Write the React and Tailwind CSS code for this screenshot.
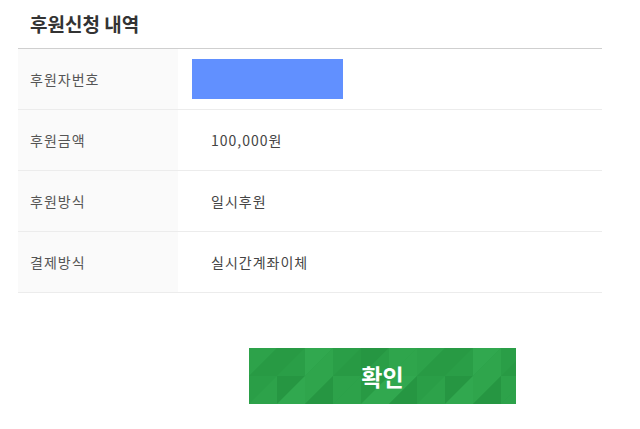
import React from 'react';

const rows = [
  { label: '후원자번호', value: null },
  { label: '후원금액', value: '100,000원' },
  { label: '후원방식', value: '일시후원' },
  { label: '결제방식', value: '실시간계좌이체' },
];

// triangle shades for the button pattern
const shades = ['#2da24a', '#289a44', '#31a84f', '#2a9e47', '#269642', '#2fa54c'];

const Pattern = () => {
  const tris = [];
  const size = 28;
  for (let r = 0; r < 2; r++) {
    for (let c = 0; c < 10; c++) {
      const x = c * size;
      const y = r * size;
      tris.push(
        <polygon key={`a${r}-${c}`} points={`${x},${y} ${x + size},${y} ${x},${y + size}`} fill={shades[(r * 3 + c) % 6]} />,
        <polygon key={`b${r}-${c}`} points={`${x + size},${y} ${x + size},${y + size} ${x},${y + size}`} fill={shades[(r * 5 + c * 2 + 1) % 6]} />
      );
    }
  }
  return (
    <svg className="absolute inset-0" width="267" height="56" viewBox="0 0 267 56" preserveAspectRatio="none">
      <rect width="267" height="56" fill="#2a9e47" />
      {tris}
    </svg>
  );
};

export default function App() {
  return (
    <div className="w-[640px] h-[429px] bg-white pl-[18px] pr-[38px] font-['Noto_Sans_CJK_KR','Noto_Sans',sans-serif]">
      <h2 className="pl-[12px] pt-[9px] pb-[9px] text-[19px] leading-[30px] font-bold text-[#333]">후원신청 내역</h2>
      <div className="border-t border-[#cfcfcf]">
        {rows.map((r) => (
          <div key={r.label} className="flex h-[61px] border-b border-[#ececec]">
            <div className="w-[160px] bg-[#fafafa] pl-[12px] flex items-center text-[14px] tracking-[1px] text-[#555]">{r.label}</div>
            <div className="flex-1 flex items-center text-[14px] tracking-[1px] text-[#444]">
              {r.value ? (
                <span className="pl-[33px]">{r.value}</span>
              ) : (
                <div className="ml-[14px] w-[151px] h-[40px] bg-[#6190ff]" />
              )}
            </div>
          </div>
        ))}
      </div>
      <div className="flex pt-[55px] pl-[231px]">
        <button className="relative w-[267px] h-[56px] overflow-hidden flex items-center justify-center">
          <Pattern />
          <span className="relative text-white text-[23px] font-bold">확인</span>
        </button>
      </div>
    </div>
  );
}
